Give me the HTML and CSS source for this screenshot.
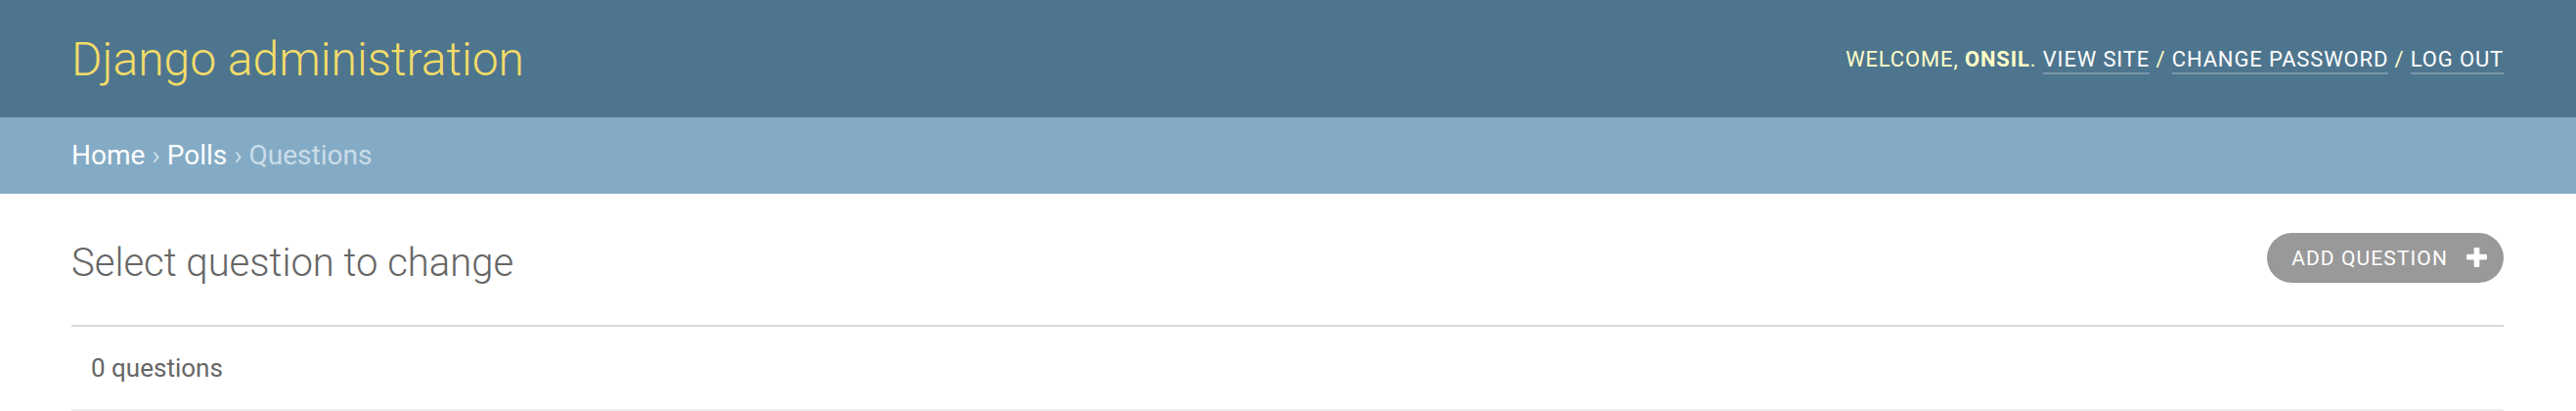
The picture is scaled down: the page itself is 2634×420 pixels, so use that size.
FILE: index.html
```html
<!DOCTYPE html>
<html lang="en">
<head>
<meta charset="utf-8">
<title>Select question to change | Django site admin</title>
<link rel="stylesheet" href="styles.css">
</head>
<body>
<div class="header">
  <div class="branding"><h1 class="site-name">Django administration</h1></div>
  <div class="user-tools">Welcome, <strong>onsil</strong>. <a href="#">View site</a> / <a href="#">Change password</a> / <a href="#">Log out</a></div>
</div>
<div class="breadcrumbs"><a href="#">Home</a> › <a href="#">Polls</a> › Questions</div>
<div class="content">
  <div class="content-head">
    <h1 class="page-title">Select question to change</h1>
    <a href="#" class="addlink"><span class="addlink-label">Add question</span><svg class="plus" viewBox="192 192 1408 1408" aria-hidden="true"><path d="M1600 736v192q0 40-28 68t-68 28h-416v416q0 40-28 68t-68 28h-192q-40 0-68-28t-28-68v-416h-416q-40 0-68-28t-28-68v-192q0-40 28-68t68-28h416v-416q0-40 28-68t68-28h192q40 0 68 28t28 68v416h416q40 0 68 28t28 68z"/></svg></a>
  </div>
  <div class="changelist">
    <p class="paginator">0 questions</p>
  </div>
</div>
</body>
</html>
```
FILE: styles.css
```css
html, body {
  margin: 0;
  padding: 0;
  background: #fff;
  font-family: Roboto, "Liberation Sans", sans-serif;
}

.header {
  height: 120px;
  box-sizing: border-box;
  padding: 0 74px 0 73px;
  background: #4e758e;
  display: flex;
  align-items: center;
  justify-content: space-between;
}

.site-name {
  margin: 0;
  font-size: 48px;
  font-weight: 300;
  color: #f2dc68;
  line-height: normal;
}

.user-tools {
  font-size: 22px;
  font-weight: 400;
  text-transform: uppercase;
  letter-spacing: 0.85px;
  color: #fffdc8;
  margin-top: 1px;
}

.user-tools strong {
  font-weight: 700;
}

.user-tools a {
  color: #fff;
  text-decoration: none;
  border-bottom: 2px solid rgba(255, 255, 255, 0.25);
  padding-bottom: 1px;
}

.breadcrumbs {
  height: 78px;
  box-sizing: border-box;
  padding: 0 73px;
  background: #84abc5;
  font-size: 28px;
  line-height: 78px;
  color: #c9dde9;
}

.breadcrumbs a {
  color: #fff;
  text-decoration: none;
}

.content {
  padding: 40px 74px 0 73px;
}

.content-head {
  display: flex;
  justify-content: space-between;
  align-items: flex-start;
}

.page-title {
  margin: 7px 0 40px 0;
  font-size: 40px;
  font-weight: 300;
  color: #666;
  line-height: normal;
}

.addlink {
  display: inline-flex;
  align-items: center;
  height: 51px;
  box-sizing: border-box;
  padding: 0 17px 0 25px;
  gap: 19px;
  border-radius: 26px;
  background: #999;
  color: #fff;
  text-decoration: none;
  text-transform: uppercase;
  font-size: 21px;
  font-weight: 400;
  letter-spacing: 1.1px;
}

.plus {
  width: 21px;
  height: 21px;
  fill: #fff;
  flex: none;
}

.changelist {
  border-top: 2px solid #dadada;
  border-bottom: 2px solid #eee;
}

.paginator {
  margin: 0;
  padding: 20px 20px;
  font-size: 26px;
  line-height: 44px;
  color: #666;
}
```
